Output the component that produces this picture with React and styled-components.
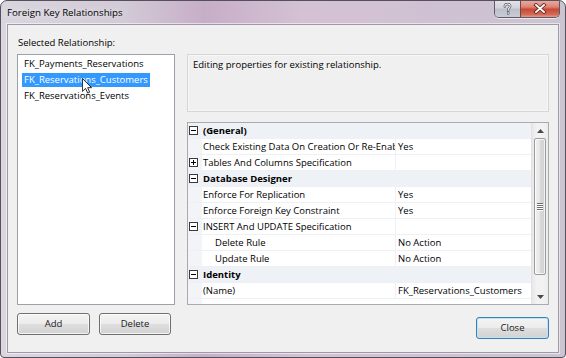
import React from "react";
import styled, { createGlobalStyle } from "styled-components";

const Global = createGlobalStyle`
  html, body { margin: 0; padding: 0; background: #ffffff; }
  body { font-family: "Open Sans", "Noto Sans", sans-serif; font-size: 9.5px; color: #000; }
  * { box-sizing: border-box; }
`;

const Window = styled.div`
  width: 566px;
  height: 358px;
  border: 1px solid #55505c;
  border-radius: 7px 7px 4px 4px;
  background: linear-gradient(90deg, #d9d6de 0%, #d2cad7 22%, #c7aec8 36%, #d4c2d4 54%, #cfc1d3 76%, #cbc4d1 100%);
  display: flex;
  flex-direction: column;
  overflow: hidden;
`;

const TitleBar = styled.div`
  height: 23px;
  display: flex;
  align-items: flex-start;
  justify-content: space-between;
  padding-left: 6px;
  padding-right: 5px;
`;

const Title = styled.div`
  line-height: 24px;
  font-size: 9.7px;
  color: #000;
  text-shadow: 0 0 6px rgba(255, 255, 255, 0.9);
`;

const CaptionGroup = styled.div`
  display: flex;
  height: 18px;
  margin-top: -1px;
  border: 1px solid #5f5a66;
  border-top: none;
  border-radius: 0 0 5px 5px;
  overflow: hidden;
  box-shadow: 0 1px 0 rgba(255, 255, 255, 0.6);
`;

const CaptionButton = styled.div`
  width: ${(p) => p.$w}px;
  height: 100%;
  display: flex;
  align-items: center;
  justify-content: center;
  background: ${(p) =>
    p.$red
      ? "linear-gradient(180deg, #eab0a6 0%, #de8576 40%, #c94a36 55%, #d46a55 85%, #e49a88 100%)"
      : "linear-gradient(180deg, #e4e4ea 0%, #d3d4dc 45%, #bdbfca 55%, #c9ccd6 100%)"};
  border-left: ${(p) => (p.$red ? "1px solid #6b4a4a" : "none")};
`;

const Client = styled.div`
  flex: 1;
  margin: 0 6px 4px 6px;
  border: 1px solid #9f99a7;
  box-shadow: 0 0 0 1px rgba(255, 255, 255, 0.55);
  background: #f0f0f0;
  padding: 11px 9px 0 9px;
  display: grid;
  align-content: start;
  grid-template-columns: 158px 1fr;
  grid-template-rows: auto 251px auto;
  column-gap: 12px;
  grid-template-areas:
    "label ."
    "list right"
    "lbtn rbtn";
`;

const Label = styled.div`
  grid-area: label;
  line-height: 14px;
  margin-bottom: 4px;
  padding-left: 1px;
`;

const ListBox = styled.div`
  grid-area: list;
  position: relative;
  background: #fff;
  border: 1px solid #9da1a9;
  padding: 1px 0 0 4px;
`;

const ListItem = styled.div`
  height: 16px;
  display: flex;
  align-items: center;
`;

const ItemText = styled.span`
  display: inline-block;
  line-height: 14px;
  padding: 0 2px;
  background: ${(p) => (p.$selected ? "#3399ff" : "transparent")};
  color: ${(p) => (p.$selected ? "#fff" : "#000")};
`;

const Cursor = styled.svg`
  position: absolute;
  left: 64px;
  top: 23px;
`;

const RightCol = styled.div`
  grid-area: right;
  display: flex;
  flex-direction: column;
  gap: 10px;
`;

const Description = styled.div`
  height: 58px;
  border: 1px solid #d6d6d6;
  box-shadow: inset 0 0 0 1px #f7f7f7;
  background: #f0f0f0;
  padding: 3px 5px;
  line-height: 14px;
`;

const PropGrid = styled.div`
  flex: 1;
  border: 1px solid #a9abb0;
  background: #fff;
  display: flex;
`;

const Rows = styled.div`
  flex: 1;
  display: flex;
  flex-direction: column;
  background: linear-gradient(90deg, #f3f4f7 0, #f3f4f7 14px, #fff 14px);
`;

const Row = styled.div`
  height: 16px;
  display: grid;
  grid-template-columns: ${(p) => (p.$cat ? "14px 1fr" : "14px 194px 1fr")};
  border-bottom: 1px solid #eef0f3;
  background: ${(p) => (p.$cat ? "#eef1f5" : "transparent")};
  line-height: 15px;
`;

const Margin = styled.div`
  display: flex;
  align-items: center;
  padding-left: 1px;
`;

const NameCell = styled.div`
  padding-left: ${(p) => (p.$indent ? 13 : 1)}px;
  font-weight: ${(p) => (p.$cat ? 700 : 400)};
  white-space: nowrap;
  overflow: hidden;
  border-right: ${(p) => (p.$cat ? "none" : "1px solid #eef0f3")};
`;

const ValueCell = styled.div`
  padding-left: 2px;
  white-space: nowrap;
  overflow: hidden;
`;

const ScrollBar = styled.div`
  width: 17px;
  display: flex;
  flex-direction: column;
  align-items: center;
  background: linear-gradient(90deg, #e7e7e7 0%, #f2f2f2 30%, #f2f2f2 70%, #ececec 100%);
  border-left: 1px solid #e2e2e2;
`;

const Arrow = styled.div`
  height: 15px;
  width: 100%;
  display: flex;
  align-items: center;
  justify-content: center;
`;

const Track = styled.div`
  flex: 1;
  width: 100%;
  padding: 0 2px;
  display: flex;
  flex-direction: column;
`;

const Thumb = styled.div`
  height: 137px;
  border: 1px solid #9b9b9b;
  border-radius: 2px;
  background: linear-gradient(90deg, #f1f1f1 0%, #e6e6e6 45%, #d8d8d8 55%, #d2d2d2 100%);
  box-shadow: inset 0 0 0 1px rgba(255, 255, 255, 0.7);
  display: flex;
  flex-direction: column;
  align-items: center;
  justify-content: center;
  gap: 1px;
`;

const Grip = styled.div`
  width: 6px;
  height: 1px;
  background: #6e6e6e;
  box-shadow: 0 1px 0 #fff;
`;

const LeftButtons = styled.div`
  grid-area: lbtn;
  display: flex;
  gap: 9px;
  margin-top: 8px;
`;

const RightButtons = styled.div`
  grid-area: rbtn;
  display: flex;
  justify-content: flex-end;
  margin-top: 12px;
`;

const Button = styled.div`
  width: ${(p) => p.$w}px;
  height: 22px;
  border: 1px solid ${(p) => (p.$default ? "#3c7fb1" : "#707070")};
  border-radius: 3px;
  background: linear-gradient(180deg, #f4f4f4 0%, #ececec 48%, #dedede 52%, #d2d2d2 100%);
  box-shadow: inset 0 0 0 1px ${(p) => (p.$default ? "#bfe3f5" : "rgba(255,255,255,0.75)")};
  display: flex;
  align-items: center;
  justify-content: center;
  color: #1a1a1a;
  line-height: 14px;
`;

const Glyph = ({ plus }) => (
  <svg width="9" height="9" viewBox="0 0 9 9">
    <rect x="0.5" y="0.5" width="8" height="8" fill="#fff" stroke="#3a3a3a" />
    <line x1="2" y1="4.5" x2="7" y2="4.5" stroke="#000" />
    {plus && <line x1="4.5" y1="2" x2="4.5" y2="7" stroke="#000" />}
  </svg>
);

const rows = [
  { cat: true, name: "(General)" },
  { name: "Check Existing Data On Creation Or Re-Enabling", value: "Yes" },
  { name: "Tables And Columns Specification", glyph: "plus" },
  { cat: true, name: "Database Designer" },
  { name: "Enforce For Replication", value: "Yes" },
  { name: "Enforce Foreign Key Constraint", value: "Yes" },
  { name: "INSERT And UPDATE Specification", glyph: "minus" },
  { name: "Delete Rule", value: "No Action", indent: true },
  { name: "Update Rule", value: "No Action", indent: true },
  { cat: true, name: "Identity" },
  { name: "(Name)", value: "FK_Reservations_Customers" },
];

const items = ["FK_Payments_Reservations", "FK_Reservations_Customers", "FK_Reservations_Events"];

export default function App() {
  return (
    <>
      <Global />
      <Window>
        <TitleBar>
          <Title>Foreign Key Relationships</Title>
          <CaptionGroup>
            <CaptionButton $w={25}>
              <svg width="9" height="12" viewBox="0 0 9 12">
                <path
                  d="M1.8 3.6 C1.8 1.6 3.2 1 4.5 1 C6 1 7.2 1.9 7.2 3.3 C7.2 4.8 5.2 5.2 5.2 6.8 L5.2 7.4 M5.2 9.4 L5.2 10.6"
                  fill="none"
                  stroke="#4a4c56"
                  strokeWidth="2.4"
                  strokeLinecap="round"
                />
                <path
                  d="M1.8 3.6 C1.8 1.6 3.2 1 4.5 1 C6 1 7.2 1.9 7.2 3.3 C7.2 4.8 5.2 5.2 5.2 6.8 L5.2 7.4 M5.2 9.4 L5.2 10.6"
                  fill="none"
                  stroke="#f4f4f8"
                  strokeWidth="1.1"
                  strokeLinecap="round"
                />
              </svg>
            </CaptionButton>
            <CaptionButton $w={39} $red>
              <svg width="14" height="11" viewBox="0 0 14 11">
                <path d="M3 2 L11 9 M11 2 L3 9" stroke="#6a2a22" strokeWidth="3.6" strokeLinecap="square" />
                <path d="M3 2 L11 9 M11 2 L3 9" stroke="#ffffff" strokeWidth="1.8" strokeLinecap="square" />
              </svg>
            </CaptionButton>
          </CaptionGroup>
        </TitleBar>
        <Client>
          <Label>Selected Relationship:</Label>
          <ListBox>
            {items.map((it, i) => (
              <ListItem key={it}>
                <ItemText $selected={i === 1}>{it}</ItemText>
              </ListItem>
            ))}
            <Cursor width="10" height="16" viewBox="0 0 12 19">
              <path d="M0.5 0.5 L0.5 16 L4.3 12.4 L6.8 18 L9.2 17 L6.8 11.5 L11.5 11.5 Z" fill="#fff" stroke="#000" strokeWidth="1" />
            </Cursor>
          </ListBox>
          <RightCol>
            <Description>Editing properties for existing relationship.</Description>
            <PropGrid>
              <Rows>
                {rows.map((r) => (
                  <Row key={r.name} $cat={r.cat}>
                    <Margin>{(r.cat || r.glyph) && <Glyph plus={r.glyph === "plus"} />}</Margin>
                    <NameCell $cat={r.cat} $indent={r.indent}>
                      {r.name}
                    </NameCell>
                    {!r.cat && <ValueCell>{r.value || ""}</ValueCell>}
                  </Row>
                ))}
              </Rows>
              <ScrollBar>
                <Arrow>
                  <svg width="7" height="4" viewBox="0 0 7 4">
                    <path d="M0 4 L3.5 0 L7 4 Z" fill="#4a4a4a" />
                  </svg>
                </Arrow>
                <Track>
                  <Thumb>
                    <Grip />
                    <Grip />
                    <Grip />
                    <Grip />
                  </Thumb>
                </Track>
                <Arrow>
                  <svg width="7" height="4" viewBox="0 0 7 4">
                    <path d="M0 0 L3.5 4 L7 0 Z" fill="#4a4a4a" />
                  </svg>
                </Arrow>
              </ScrollBar>
            </PropGrid>
          </RightCol>
          <LeftButtons>
            <Button $w={73}>Add</Button>
            <Button $w={72}>Delete</Button>
          </LeftButtons>
          <RightButtons>
            <Button $w={73} $default>
              Close
            </Button>
          </RightButtons>
        </Client>
      </Window>
    </>
  );
}
